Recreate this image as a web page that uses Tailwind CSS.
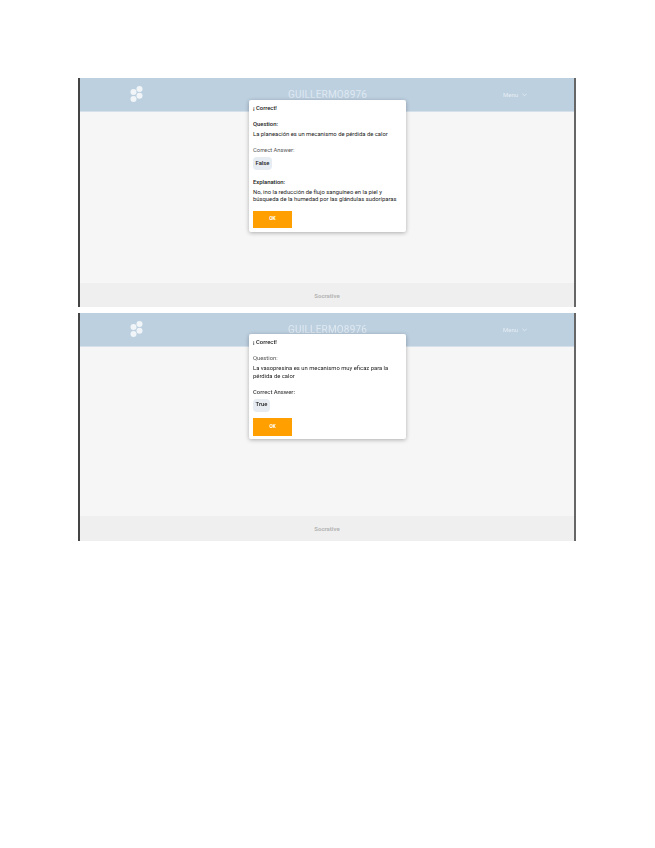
<!DOCTYPE html>
<html lang="en">
<head>
    <meta charset="UTF-8">
    <title>Socrative</title>
    <script src="https://cdn.jsdelivr.net/npm/@tailwindcss/browser@4"></script>
</head>
<body class="bg-white font-['Roboto',sans-serif] text-[#222]">
    <div class="w-[655px] h-[848px] pt-[78px] pl-[78px] flex flex-col gap-[6px] blur-[0.35px]">

        <!-- First result -->
        <section class="relative w-[498px] h-[229px] flex flex-col border-l-2 border-r-2 border-l-[#444] border-r-[#666] bg-[#f6f6f6]">
            <header class="h-[34px] bg-[#bdd0e0] border-b border-[#d5e0ea] flex items-center relative">
                <svg class="ml-[48px] mb-[2px] w-[16px] h-[18px] text-[#f1f5f8]" viewBox="0 0 16 18" fill="currentColor">
                    <circle cx="11.5" cy="4" r="3"/>
                    <circle cx="11.5" cy="10.7" r="3"/>
                    <circle cx="5.5" cy="7" r="3"/>
                    <circle cx="5.5" cy="14" r="3"/>
                </svg>
                <h1 class="ml-[144px] text-[10px] tracking-[0.18px] text-[#dfe8f0]">GUILLERMO8976</h1>
                <div class="ml-[136px] flex items-center gap-[4px] text-[6px] text-[#e6edf3]">
                    Menu
                    <svg class="w-[5px] h-[4px]" viewBox="0 0 6 4" fill="none" stroke="currentColor"><path d="M0.5 0.5 3 3 5.5 0.5"/></svg>
                </div>
            </header>
            <main class="flex-1"></main>
            <footer class="h-[24px] bg-[#efefef] flex items-center justify-center text-[6px] font-bold text-[#b5b5b5]">Socrative</footer>

            <div class="absolute left-[169px] top-[22px] w-[157px] h-[132px] bg-white rounded-[2px] shadow-[0_1px_4px_rgba(0,0,0,0.3)] px-[4px] pt-[5px] text-[5.85px] leading-[7.5px]">
                <p class="font-medium">¡ Correct!</p>
                <p class="mt-[8.5px] font-medium">Question:</p>
                <p class="mt-[2px]">La planeación es un mecanismo de pérdida de calor</p>
                <p class="mt-[9px] text-[#555]">Correct Answer:</p>
                <span class="mt-[2.5px] w-[19px] h-[13px] rounded-[4px] bg-[#e6ecf2] flex items-center justify-center font-medium">False</span>
                <p class="mt-[9px] font-medium">Explanation:</p>
                <p class="mt-[2px]">No, ino la reducción de flujo sanguíneo en la piel y<br>búsqueda de la humedad por las glándulas sudoríparas</p>
                <button class="mt-[7px] block w-[39px] h-[17px] bg-[#ffa000] text-white font-bold text-[5px]">OK</button>
            </div>
        </section>

        <!-- Second result -->
        <section class="relative w-[498px] h-[228px] flex flex-col border-l-2 border-r-2 border-l-[#444] border-r-[#666] bg-[#f6f6f6]">
            <header class="h-[34px] bg-[#bdd0e0] border-b border-[#d5e0ea] flex items-center relative">
                <svg class="ml-[48px] mb-[2px] w-[16px] h-[18px] text-[#f1f5f8]" viewBox="0 0 16 18" fill="currentColor">
                    <circle cx="11.5" cy="4" r="3"/>
                    <circle cx="11.5" cy="10.7" r="3"/>
                    <circle cx="5.5" cy="7" r="3"/>
                    <circle cx="5.5" cy="14" r="3"/>
                </svg>
                <h1 class="ml-[144px] text-[10px] tracking-[0.18px] text-[#dfe8f0]">GUILLERMO8976</h1>
                <div class="ml-[136px] flex items-center gap-[4px] text-[6px] text-[#e6edf3]">
                    Menu
                    <svg class="w-[5px] h-[4px]" viewBox="0 0 6 4" fill="none" stroke="currentColor"><path d="M0.5 0.5 3 3 5.5 0.5"/></svg>
                </div>
            </header>
            <main class="flex-1"></main>
            <footer class="h-[25px] bg-[#efefef] flex items-center justify-center text-[6px] font-bold text-[#b5b5b5]">Socrative</footer>

            <div class="absolute left-[169px] top-[21px] w-[157px] h-[105px] bg-white rounded-[2px] shadow-[0_1px_4px_rgba(0,0,0,0.3)] px-[4px] pt-[5px] text-[5.85px] leading-[7.5px]">
                <p class="font-medium">¡ Correct!</p>
                <p class="mt-[8.5px] text-[#555]">Question:</p>
                <p class="mt-[2.5px]">La vasopresina es un mecanismo muy eficaz para la<br>pérdida de calor</p>
                <p class="mt-[8.5px] font-medium text-[#444]">Correct Answer:</p>
                <span class="mt-[2.5px] w-[17px] h-[13px] rounded-[4px] bg-[#e6ecf2] flex items-center justify-center font-medium">True</span>
                <button class="mt-[6px] block w-[39px] h-[18px] bg-[#ffa000] text-white font-bold text-[5px]">OK</button>
            </div>
        </section>
    </div>
</body>
</html>
